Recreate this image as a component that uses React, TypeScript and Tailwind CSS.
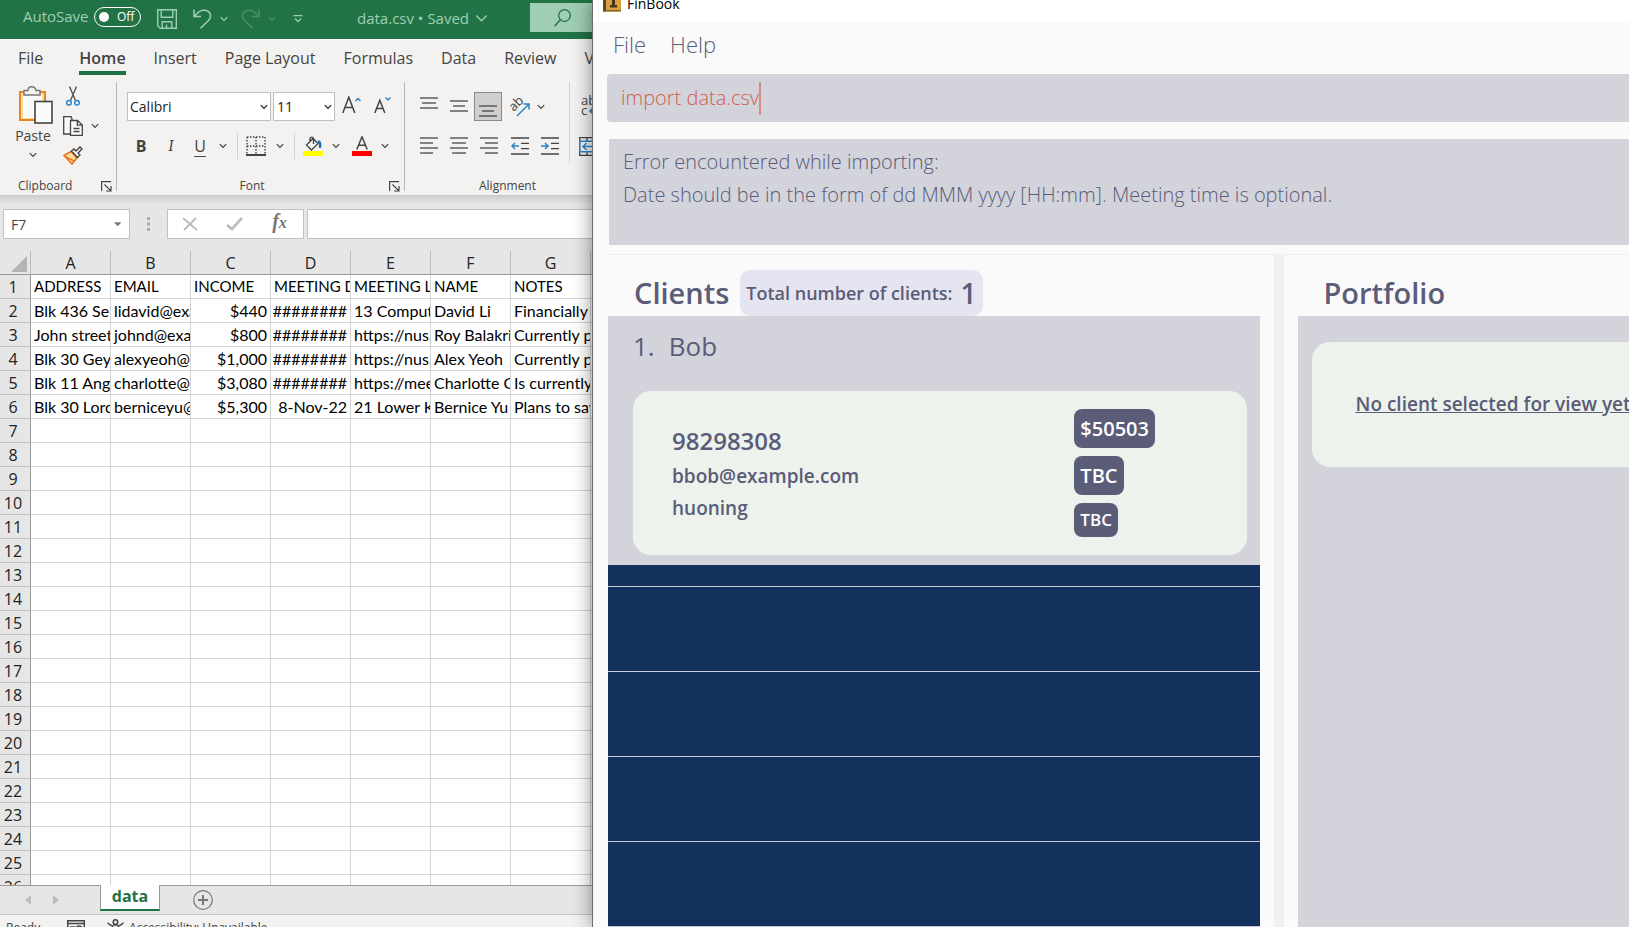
import React from "react";

const Chevron = ({ className = "", size = 8 }: { className?: string; size?: number }) => (
  <svg width={size} height={size} viewBox="0 0 8 8" fill="none" stroke="currentColor" strokeWidth={size > 8 ? 0.9 : 1.2} className={className} aria-hidden="true">
    <path d="M0.8 2.2 L4 5.4 L7.2 2.2" />
  </svg>
);

const toolBtn = "flex shrink-0 items-center justify-center";

/* ---------- Spreadsheet: title bar ---------- */

function TitleBar() {
  return (
    <header className="flex h-[39px] shrink-0 items-start bg-[#217346] text-[#9fceb4]">
      <label className="flex h-[33px] w-[141px] items-center justify-between pl-[23px] text-[15px]">
        AutoSave
        <button role="switch" aria-checked="false" className="flex h-5 w-[47px] items-center gap-2 rounded-full border border-white pl-1 text-[12px] text-white">
          <span className="size-[10px] rounded-full bg-white" />
          Off
        </button>
      </label>
      <div className="flex h-[38px] items-center pl-4">
        <button aria-label="Save" className={toolBtn + " w-5"}>
          <svg width="20" height="20" viewBox="0 0 20 20" fill="none" stroke="currentColor" strokeWidth="1.4">
            <path d="M0.7 0.7H19.3V19.3H3.2L0.7 16.8Z M4.2 0.7V8.3H15.8V0.7 M5.2 19.3V12.7H14.8V19.3 M9.5 15.5V19.3" />
          </svg>
        </button>
        <button aria-label="Undo" className={toolBtn + " ml-4 w-[19px]"}>
          <svg width="19" height="20" viewBox="0 0 19 20" fill="none" stroke="currentColor" strokeWidth="1.5">
            <path d="M1 0.5V7.5H8 M1.2 7.3L6 2.8C10 -0.2 17.5 1 17.5 7C17.5 9 16.8 10.3 15.3 11.8L7.5 19.3" />
          </svg>
        </button>
        <button aria-label="Undo options" className={toolBtn + " ml-[7px] w-[10px]"}><Chevron /></button>
        <button aria-label="Redo" disabled className={toolBtn + " ml-3 w-[19px] text-[#4a8f69]"}>
          <svg width="19" height="20" viewBox="0 0 19 20" fill="none" stroke="currentColor" strokeWidth="1.5">
            <path d="M18 0.5V7.5H11 M17.8 7.3L13 2.8C9 -0.2 1.5 1 1.5 7C1.5 9 2.2 10.3 3.7 11.8L11.5 19.3" />
          </svg>
        </button>
        <button aria-label="Redo options" disabled className={toolBtn + " ml-[7px] w-[10px] text-[#4a8f69]"}><Chevron /></button>
        <button aria-label="Customize toolbar" className={toolBtn + " ml-4 w-[10px]"}>
          <svg width="10" height="8" viewBox="0 0 10 8" fill="none" stroke="currentColor" strokeWidth="1.3">
            <path d="M0.5 0.7H9.5 M2 3.5L5 6.5L8 3.5" />
          </svg>
        </button>
      </div>
      <button className="ml-[54px] flex h-[37px] items-center gap-[6px] whitespace-nowrap text-[15px]">
        data.csv • Saved <Chevron size={13} />
      </button>
      <button className="ml-auto mt-[3px] flex h-[29px] w-[62px] shrink-0 items-center gap-5 overflow-hidden bg-[#9fceb4] pl-6 text-[15px] text-[#217346]">
        <svg width="17" height="18" viewBox="0 0 17 18" fill="none" stroke="currentColor" strokeWidth="1.3" className="shrink-0">
          <circle cx="10.5" cy="6.5" r="5.8" />
          <path d="M6.3 10.8L0.5 17.3" />
        </svg>
        Search
      </button>
    </header>
  );
}

/* ---------- Spreadsheet: ribbon ---------- */

const Lines = ({ rows, top }: { rows: [number, number][]; top: number }) => (
  <svg width="18" height="20" viewBox="0 0 18 20" stroke="#444" strokeWidth="1.3" aria-hidden="true">
    {rows.map(([a, b], i) => (
      <path key={i} d={`M${a} ${top + i * 5}H${b}`} />
    ))}
  </svg>
);

const Launcher = ({ label }: { label: string }) => (
  <button aria-label={label}>
    <svg width="11" height="11" viewBox="0 0 11 11" fill="none" stroke="#444" strokeWidth="1.2">
      <path d="M0.6 10V0.6H10 M3.5 3.5L9.8 9.8 M10 5V10H5" />
    </svg>
  </button>
);

function Indent({ right }: { right?: boolean }) {
  return (
    <svg width="18" height="18" viewBox="0 0 18 18" fill="none" stroke="#444" strokeWidth="1.3">
      <path d="M0 1H18 M10 6.3H18 M10 11.6H18 M0 17H18" />
      <path stroke="#2a86cb" strokeWidth="1.5" d={right ? "M0 9H7 M4 6L7 9L4 12" : "M8 9H1 M4 6L1 9L4 12"} />
    </svg>
  );
}

function Ribbon() {
  return (
    <div className="flex h-[157px] shrink-0 flex-col overflow-hidden border-b border-[#c8c8c8] bg-[#f3f2f1] text-[#444]">
      <nav className="flex h-[43px] shrink-0 gap-7 whitespace-nowrap pl-[18px] text-[16px] leading-[38px]">
        <button className="mr-2 h-9">File</button>
        <button className="h-9 border-b-4 border-[#217346] font-semibold leading-[38px]">Home</button>
        <button className="h-9">Insert</button>
        <button className="h-9">Page Layout</button>
        <button className="h-9">Formulas</button>
        <button className="h-9">Data</button>
        <button className="h-9">Review</button>
        <button className="h-9">View</button>
      </nav>
      <div className="flex h-[109px] text-[12px]">
        <section className="flex w-[117px] shrink-0 flex-col justify-between border-r border-[#b5b5b5]">
          <div className="flex">
            <button className="flex w-[53px] flex-col items-end pt-1 text-[14px] leading-6">
              <svg width="35" height="38" viewBox="0 0 35 38" fill="none">
                <path d="M2 6H27V34H2Z" fill="#fbdba0" stroke="#e8871e" strokeWidth="2" />
                <rect x="5" y="9" width="19" height="23" fill="#fafafa" />
                <path d="M6 9V4.5H10C10 -0.5 17 -0.5 18 4.5H22V9Z" fill="#f3f2f1" stroke="#777" strokeWidth="1.4" />
                <rect x="17" y="15.5" width="17" height="21.5" fill="#fafafa" stroke="#444" strokeWidth="1.6" />
              </svg>
              <span className="self-center pl-[13px]">Paste</span>
              <Chevron className="mr-4 mt-[3px]" />
            </button>
            <div className="flex w-12 flex-col gap-[10px] pl-[10px] pt-1">
              <button aria-label="Cut" className="pl-[3px]">
                <svg width="14" height="20" viewBox="0 0 14 20" fill="none">
                  <path d="M3.5 0.5L9.5 14.5 M10.5 0.5L4.5 14.5" stroke="#555" strokeWidth="1.4" />
                  <circle cx="3" cy="16.8" r="2.3" stroke="#2a86cb" strokeWidth="1.5" />
                  <circle cx="11" cy="16.8" r="2.3" stroke="#2a86cb" strokeWidth="1.5" />
                </svg>
              </button>
              <div className="flex items-center gap-2">
                <button aria-label="Copy">
                  <svg width="20" height="20" viewBox="0 0 20 20" fill="#fafafa" stroke="#444" strokeWidth="1.3">
                    <path d="M0.7 0.7H8L9 3V18H0.7Z" />
                    <path d="M7.5 4.5H14.5L19.3 9V19.3H7.5Z M14.3 4.7V9.2H19 M10.5 12.5H16.5 M10.5 15.5H16.5" />
                  </svg>
                </button>
                <button aria-label="Copy options"><Chevron /></button>
              </div>
              <button aria-label="Format painter">
                <svg width="20" height="19" viewBox="0 0 20 19" fill="none">
                  <path d="M1 9.5L8 5.5L14 12L9 18Z" fill="#fbdba0" stroke="#e8731e" strokeWidth="1.6" />
                  <path d="M3 11L11 15" stroke="#e8731e" strokeWidth="1.4" />
                  <path d="M8.5 5L11 3L13 5L17 1L19 3L15 7L17 9L14.5 11.5Z" fill="#fafafa" stroke="#444" strokeWidth="1.4" />
                </svg>
              </button>
            </div>
          </div>
          <div className="flex h-[10px] items-center justify-between pl-[18px] pr-1">Clipboard<Launcher label="Clipboard settings" /></div>
        </section>

        <section className="flex w-[288px] shrink-0 flex-col border-r border-[#b5b5b5] pl-[10px]">
          <div className="mt-[10px] flex h-[29px] items-center">
            <div className="relative h-full">
              <select aria-label="Font" className="h-full w-[144px] appearance-none border border-[#c0c0c0] bg-white pl-[2px] text-[14px] text-[#222]"><option>Calibri</option></select>
              <Chevron className="pointer-events-none absolute right-[3px] top-[11px] text-[#222]" />
            </div>
            <div className="relative ml-[2px] h-full">
              <select aria-label="Font size" className="h-full w-[62px] appearance-none border border-[#c0c0c0] bg-white pl-[3px] text-[14px] text-[#222]"><option>11</option></select>
              <Chevron className="pointer-events-none absolute right-[3px] top-[11px] text-[#222]" />
            </div>
            <button aria-label="Increase font size" className="ml-[7px] pb-1">
              <svg width="20" height="18" viewBox="0 0 20 18" fill="none" strokeWidth="1.5">
                <path stroke="#444" d="M0.8 17L6.8 1.2L12.8 17 M2.8 11.5H10.8" />
                <path stroke="#2a86cb" d="M13.5 5L16 2.5L18.5 5" />
              </svg>
            </button>
            <button aria-label="Decrease font size" className="ml-3 pb-1">
              <svg width="18" height="18" viewBox="0 0 18 18" fill="none" strokeWidth="1.5">
                <path stroke="#444" d="M0.8 17L5.8 4.2L10.8 17 M2.6 12.5H9" />
                <path stroke="#2a86cb" d="M11.5 1.5L14 4L16.5 1.5" />
              </svg>
            </button>
          </div>
          <div className="mt-3 flex h-[26px] items-center text-[16px]">
            <button className="w-[28px] font-bold">B</button>
            <button className="w-[32px] font-serif italic">I</button>
            <button className="w-[26px] underline underline-offset-4">U</button>
            <button aria-label="Underline options" className={toolBtn + " w-[20px]"}><Chevron /></button>
            <span className="ml-1 mr-2 h-full w-px bg-[#d0d0d0]" />
            <button aria-label="Borders" className={toolBtn + " w-5"}>
              <svg width="20" height="20" viewBox="0 0 20 20" fill="none" stroke="#444" strokeWidth="1.4">
                <path strokeDasharray="1.5 1.5" d="M1 1H19 M1 10H19 M1 1V18 M10 1V18 M19 1V18" />
                <path strokeWidth="2" d="M0 19H20" />
              </svg>
            </button>
            <button aria-label="Border options" className={toolBtn + " w-[28px]"}><Chevron /></button>
            <span className="mr-2 h-full w-px bg-[#d0d0d0]" />
            <button aria-label="Fill color" className={toolBtn + " w-5"}>
              <svg width="20" height="20" viewBox="0 0 20 20" fill="none" stroke="#444" strokeWidth="1.4">
                <path fill="#fafafa" d="M3.5 9L10 2.5L15 7.5L8.5 14Z M7 5V2.5A1.8 1.8 0 0 1 10.5 2.5V8" />
                <path d="M15 5.5C17 5.5 17.5 7 17 12" stroke="#1f6fb5" strokeWidth="2.4" />
                <rect y="15" width="20" height="5" fill="#ffff00" stroke="none" />
              </svg>
            </button>
            <button aria-label="Fill color options" className={toolBtn + " w-[29px] pr-1"}><Chevron /></button>
            <button aria-label="Font color" className={toolBtn + " w-5"}>
              <svg width="20" height="20" viewBox="0 0 20 20" fill="none" stroke="#444" strokeWidth="1.5">
                <path d="M4.8 13.5L10 0.8L15.2 13.5 M6.5 9.3H13.5" />
                <rect y="15" width="20" height="5" fill="#ff0000" stroke="none" />
              </svg>
            </button>
            <button aria-label="Font color options" className={toolBtn + " w-[25px]"}><Chevron /></button>
          </div>
          <div className="mt-auto flex h-[10px] items-center pr-1"><span className="flex-1 pr-3 text-center">Font</span><Launcher label="Font settings" /></div>
        </section>

        <section className="flex w-[210px] shrink-0 flex-col pl-[9px]">
          <div className="flex h-[81px]">
            <div className="flex w-[156px] flex-col border-r border-[#d0d0d0]">
              <div className="mt-[10px] flex h-[29px] items-center">
                <button aria-label="Top align" className={toolBtn + " w-[30px]"}><Lines top={1} rows={[[0, 18], [2, 16], [0, 18]]} /></button>
                <button aria-label="Middle align" className={toolBtn + " w-[30px]"}><Lines top={4} rows={[[0, 18], [3, 15], [0, 18]]} /></button>
                <button aria-label="Bottom align" className={toolBtn + " h-[29px] w-7 border border-[#8a8a8a] bg-[#d0cfce]"}><Lines top={9} rows={[[0, 18], [3, 15], [0, 18]]} /></button>
                <button aria-label="Orientation" className={toolBtn + " ml-1 w-[27px]"}>
                  <svg width="22" height="22" viewBox="0 0 22 22" fill="none">
                    <text x="3" y="16" fontSize="13" fill="#444" transform="rotate(-45 4 14)">ab</text>
                    <path d="M8 20L20 8 M14.5 8H20V13.5" stroke="#2a86cb" strokeWidth="1.5" />
                  </svg>
                </button>
                <button aria-label="Orientation options" className={toolBtn + " w-4"}><Chevron /></button>
              </div>
              <div className="mt-3 flex h-[26px] items-center">
                <button aria-label="Align left" className={toolBtn + " w-[30px]"}><Lines top={2} rows={[[0, 18], [0, 13], [0, 18], [0, 13]]} /></button>
                <button aria-label="Center" className={toolBtn + " w-[30px]"}><Lines top={2} rows={[[0, 18], [2, 16], [0, 18], [2, 16]]} /></button>
                <button aria-label="Align right" className={toolBtn + " w-[30px]"}><Lines top={2} rows={[[0, 18], [5, 18], [0, 18], [5, 18]]} /></button>
                <button aria-label="Decrease indent" className={toolBtn + " w-[32px]"}><Indent /></button>
                <button aria-label="Increase indent" className={toolBtn + " w-[28px]"}><Indent right /></button>
              </div>
            </div>
            <div className="flex flex-col gap-5 pl-[9px] pt-[13px]">
              <button aria-label="Wrap text">
                <svg width="24" height="22" viewBox="0 0 24 22" fill="none">
                  <text x="2" y="10" fontSize="13" fill="#444">ab</text>
                  <text x="2" y="20" fontSize="13" fill="#444">c</text>
                  <path d="M22 6V16H11 M14 13L11 16L14 19" stroke="#2a86cb" strokeWidth="1.5" />
                </svg>
              </button>
              <button aria-label="Merge cells">
                <svg width="24" height="19" viewBox="0 0 24 19" fill="none" stroke="#444" strokeWidth="1.3">
                  <path d="M0.7 0.7H23.3V18.3H0.7Z M8 0.7V4 M16 0.7V4 M8 15V18 M16 15V18" />
                  <path d="M0.7 4.2H23.3V14.8H0.7Z M4 9.5H20 M7.5 6L4 9.5L7.5 13" stroke="#2a86cb" strokeWidth="1.5" />
                </svg>
              </button>
            </div>
          </div>
          <div className="mt-auto flex h-[10px] items-center pl-[65px]">Alignment</div>
        </section>
      </div>
    </div>
  );
}

/* ---------- Spreadsheet: formula bar and grid ---------- */

function FormulaBar() {
  return (
    <div className="flex h-[55px] shrink-0 items-start bg-linear-to-b from-[#cfcfcf] to-[#e6e6e6] to-15% pl-[3px] pt-[13px]">
      <div className="flex h-[30px] w-[127px] items-center border border-[#c0c0c0] bg-white pl-[7px] pr-2">
        <input aria-label="Name box" defaultValue="F7" className="w-full min-w-0 text-[14px] text-[#444] outline-none" />
        <svg width="8" height="5" viewBox="0 0 8 5" fill="#777"><path d="M0 0H8L4 4.5Z" /></svg>
      </div>
      <svg width="37" height="30" viewBox="0 0 37 30" fill="#a8a8a8" className="shrink-0">
        <path d="M17 8H20V11H17Z M17 13.5H20V16.5H17Z M17 19H20V22H17Z" />
      </svg>
      <div className="flex h-[30px] w-[137px] shrink-0 items-center border border-[#c0c0c0] bg-white">
        <button aria-label="Cancel" className="w-[43px]">
          <svg width="16" height="14" viewBox="0 0 16 14" fill="none" stroke="#bdbdbd" strokeWidth="2" className="mx-auto"><path d="M1 1L15 13 M14 1L2 13" /></svg>
        </button>
        <button aria-label="Enter" className="w-[47px]">
          <svg width="17" height="14" viewBox="0 0 17 14" fill="none" stroke="#bdbdbd" strokeWidth="2.8" className="mx-auto"><path d="M1 8L6 12L16 1" /></svg>
        </button>
        <button className="w-[43px] pb-1 font-['Liberation_Serif',serif] text-[20px] leading-5 font-bold italic text-[#777]">f<span className="text-[16px]">x</span></button>
      </div>
      <input aria-label="Formula" className="ml-[3px] h-[30px] min-w-0 flex-1 border border-r-0 border-[#c0c0c0] bg-white outline-none" />
    </div>
  );
}

const columns = ["A", "B", "C", "D", "E", "F", "G"];
const records: string[][] = [
  ["ADDRESS", "EMAIL", "INCOME", "MEETING DATE", "MEETING LOCATION", "NAME", "NOTES"],
  ["Blk 436 Serangoon", "lidavid@example.com", "$440", "########", "13 Computing Drive", "David Li", "Financially"],
  ["John street", "johnd@example.com", "$800", "########", "https://nus.zoom.us", "Roy Balakrishnan", "Currently pursuing"],
  ["Blk 30 Geylang", "alexyeoh@example.com", "$1,000", "########", "https://nus.zoom.us", "Alex Yeoh", "Currently pursuing"],
  ["Blk 11 Ang Mo Kio", "charlotte@example.com", "$3,080", "########", "https://meet.com", "Charlotte Oliveiro", "Is currently"],
  ["Blk 30 Lorong", "berniceyu@example.com", "$5,300", "8-Nov-22", "21 Lower Kent", "Bernice Yu", "Plans to save"],
];

function Grid() {
  return (
    <div className="min-h-0 flex-1 overflow-hidden bg-white">
      <table className="w-[671px] table-fixed border-separate border-spacing-0 font-['Lato','Liberation_Sans',sans-serif] text-[16px] leading-[23px] text-black">
        <colgroup>
          <col className="w-[31px]" />
          {[...columns, "H"].map((c) => <col key={c} className="w-[80px]" />)}
        </colgroup>
        <thead>
          <tr className="h-6 bg-[#e6e6e6] font-['Open_Sans','Noto_Sans',sans-serif] text-[#222]">
            <th className="border-r border-b border-[#999] border-r-[#bbb] p-0">
              <svg width="16" height="16" viewBox="0 0 16 16" className="ml-[11px] mt-[3px] block"><path d="M16 0V16H0Z" fill="#b4b4b4" /></svg>
            </th>
            {columns.map((c) => (
              <th key={c} scope="col" className="border-r border-b border-[#999] border-r-[#bbb] p-0 pt-[2px] leading-[21px] font-normal">{c}</th>
            ))}
            <td className="border-b border-[#999] p-0" />
          </tr>
        </thead>
        <tbody>
          {Array.from({ length: 26 }, (_, r) => (
            <tr key={r} className="h-6">
              <th scope="row" className="border-r border-b border-[#c3c3c3] border-r-[#999] bg-[#e6e6e6] p-0 pt-[2px] pr-1 font-['Open_Sans','Noto_Sans',sans-serif] leading-[21px] font-normal text-[#222]">{r + 1}</th>
              {columns.map((c, i) => {
                const right = r > 0 && (i === 2 || i === 3);
                return (
                  <td key={c} className={"overflow-hidden border-r border-b border-[#d4d4d4] p-0 whitespace-nowrap " + (right ? "pr-[3px] text-right" : "pl-[3px]") + (r === 0 ? " text-[15px]" : "")}>
                    {records[r]?.[i]}
                  </td>
                );
              })}
              <td className="border-b border-[#d4d4d4] p-0" />
            </tr>
          ))}
        </tbody>
      </table>
    </div>
  );
}

function Spreadsheet() {
  return (
    <div className="flex w-[592px] shrink-0 flex-col overflow-hidden">
      <TitleBar />
      <Ribbon />
      <FormulaBar />
      <Grid />
      <div className="flex h-[29px] shrink-0 items-start bg-[#e6e6e6]">
        <div className="flex h-full w-[100px] items-center gap-[22px] border-t border-[#999] pl-[25px] text-[#bdbdbd]">
          <button aria-label="Previous sheet"><svg width="6" height="10" viewBox="0 0 6 10" fill="currentColor"><path d="M6 0V10L0 5Z" /></svg></button>
          <button aria-label="Next sheet"><svg width="6" height="10" viewBox="0 0 6 10" fill="currentColor"><path d="M0 0V10L6 5Z" /></svg></button>
        </div>
        <button className="h-[26px] w-[60px] border-x border-b-2 border-x-[#999] border-b-[#217346] bg-white pb-[2px] text-[16px] leading-[20px] font-bold text-[#217346]">data</button>
        <div className="flex h-full flex-1 items-center border-t border-[#999] pl-[33px]">
          <button aria-label="New sheet">
            <svg width="20" height="20" viewBox="0 0 20 20" fill="none" stroke="#777"><circle cx="10" cy="10" r="9.3" strokeWidth="1.2" /><path d="M5 10H15 M10 5V15" strokeWidth="2" /></svg>
          </button>
        </div>
      </div>
      <footer className="flex h-[13px] shrink-0 items-start overflow-hidden border-t border-[#c3c3c3] bg-[#f3f2f1] pl-[6px] text-[12px] leading-6 text-[#444]">
        <span className="w-[61px] pt-[1px]">Ready</span>
        <svg width="18" height="14" viewBox="0 0 18 14" fill="none" stroke="#444" strokeWidth="1.5" className="mt-[5px] shrink-0">
          <path d="M0.7 0.7H17.3V13H0.7Z M0.7 3.5H17.3 M3 7H8 M3 10H8" /><circle cx="12" cy="9" r="3" />
        </svg>
        <svg width="17" height="18" viewBox="0 0 17 18" fill="none" stroke="#444" strokeWidth="1.5" className="mt-1 ml-[22px] shrink-0">
          <circle cx="8.5" cy="3" r="2.3" /><path d="M1 3.5C0.5 6 6 6 6 8L4 16 M16 3.5C16.5 6 11 6 11 8L13 16 M6 6H11" />
        </svg>
        <span className="ml-[5px] pt-[1px] whitespace-nowrap">Accessibility: Unavailable</span>
      </footer>
    </div>
  );
}

/* ---------- FinBook window ---------- */

const tag = "rounded-lg bg-[#5a5c78] px-[6px] font-semibold text-white";

function FinBook() {
  return (
    <div className="relative flex min-w-0 flex-1 flex-col border-l border-[#6b6b6b] bg-[#fafafa] text-[#5a5c78] shadow-[0_0_18px_rgba(0,0,0,0.45)]">
      <div className="flex h-[22px] shrink-0 items-start gap-[6px] overflow-hidden bg-white pl-[10px] text-[14px] leading-[8px] text-black">
        <svg width="18" height="12" viewBox="0 0 18 12" className="shrink-0">
          <path d="M0 0H18V11.5H0Z" fill="#d9a040" /><path d="M0 0H3V11.5H0Z" fill="#5a4438" /><path d="M3 10H18V11.5H0Z" fill="#8a6428" />
          <path d="M9 0H12V5H14V7.5H7V5H9Z" fill="#4a3420" />
        </svg>
        <span>FinBook</span>
      </div>
      <nav className="flex h-[52px] shrink-0 gap-6 pl-5 text-[22px] leading-[44px] font-light">
        <button className="self-start">File</button>
        <button className="self-start">Help</button>
      </nav>
      <div className="ml-[14px] flex h-12 shrink-0 items-center rounded-l-[4px] bg-[#d3d3dc] pl-[14px]">
        <input aria-label="Command" defaultValue="import data.csv" className="[field-sizing:content] text-[20px] font-light text-[#d0604f] outline-none" />
        <span className="h-[33px] w-[2px] bg-[#d98a82]" />
      </div>
      <output className="mt-[17px] ml-4 block h-[106px] shrink-0 bg-[#d3d3dc] pt-[6px] pl-[14px] text-[20px] leading-[33px] font-light whitespace-nowrap">
        Error encountered while importing:<br />
        Date should be in the form of dd MMM yyyy [HH:mm]. Meeting time is optional.
      </output>
      <div className="mt-[9px] ml-[14px] h-px shrink-0 bg-[#edf2ec]" />
      <main className="flex min-h-0 flex-1">
        <section className="flex min-w-0 flex-[680_1_0%] flex-col pr-[14px] pl-[15px]">
          <div className="flex h-[61px] shrink-0 items-end gap-[11px] pl-[26px]">
            <h2 className="text-[29px] leading-[46px] font-semibold">Clients</h2>
            <div className="flex h-[46px] items-center gap-2 rounded-[10px] bg-[#e5e5f1] px-[6px] font-semibold whitespace-nowrap">
              <span className="text-[18px]">Total number of clients:</span>
              <span className="text-[28px]">1</span>
            </div>
          </div>
          <ol className="h-[249px] shrink-0 bg-[#d3d3dc] pr-[13px] pl-[25px]">
            <li>
              <h3 className="flex h-[75px] gap-[14px] text-[26px] leading-[60px]"><span>1.</span><span>Bob</span></h3>
              <div className="flex h-[164px] rounded-[18px] bg-[#edf2ec] pl-[39px]">
                <div className="flex flex-[402_1_0%] flex-col pt-[34px] font-semibold">
                  <span className="text-[24px] leading-8">98298308</span>
                  <span className="text-[19px] leading-[38px]">bbob@example.com</span>
                  <span className="text-[19px] leading-[26px]">huoning</span>
                </div>
                <div className="flex flex-[172_1_0%] flex-col items-start gap-2 pt-[18px]">
                  <span className={tag + " text-[20px] leading-[39px]"}>$50503</span>
                  <span className={tag + " text-[20px] leading-[39px]"}>TBC</span>
                  <span className={tag + " text-[17px] leading-[34px]"}>TBC</span>
                </div>
              </div>
            </li>
          </ol>
          <div className="flex min-h-0 flex-1 flex-col overflow-hidden bg-[#14305c]">
            <div className="h-[22px] shrink-0 border-b border-[#c5cad6]" />
            {[0, 1, 2, 3].map((i) => <div key={i} className="h-[85px] shrink-0 border-b border-[#c5cad6]" />)}
          </div>
        </section>
        <div className="w-[10px] shrink-0 bg-[#edf2ec]" />
        <section className="flex min-w-0 flex-[346_1_0%] flex-col overflow-hidden pl-[14px]">
          <h2 className="flex h-[61px] shrink-0 items-end pl-[26px] text-[29px] leading-[46px] font-semibold">Portfolio</h2>
          <div className="flex-1 bg-[#d3d3dc] pt-[26px] pl-[14px]">
            <div className="h-[125px] rounded-l-[18px] bg-[#edf2ec] pl-[44px] text-[19px] leading-[124px] font-semibold whitespace-nowrap underline">
              No client selected for view yet
            </div>
          </div>
        </section>
      </main>
    </div>
  );
}

export default function App() {
  return (
    <div className="flex h-screen overflow-hidden bg-[#fafafa] font-['Open_Sans','Noto_Sans',sans-serif]">
      <Spreadsheet />
      <FinBook />
    </div>
  );
}
